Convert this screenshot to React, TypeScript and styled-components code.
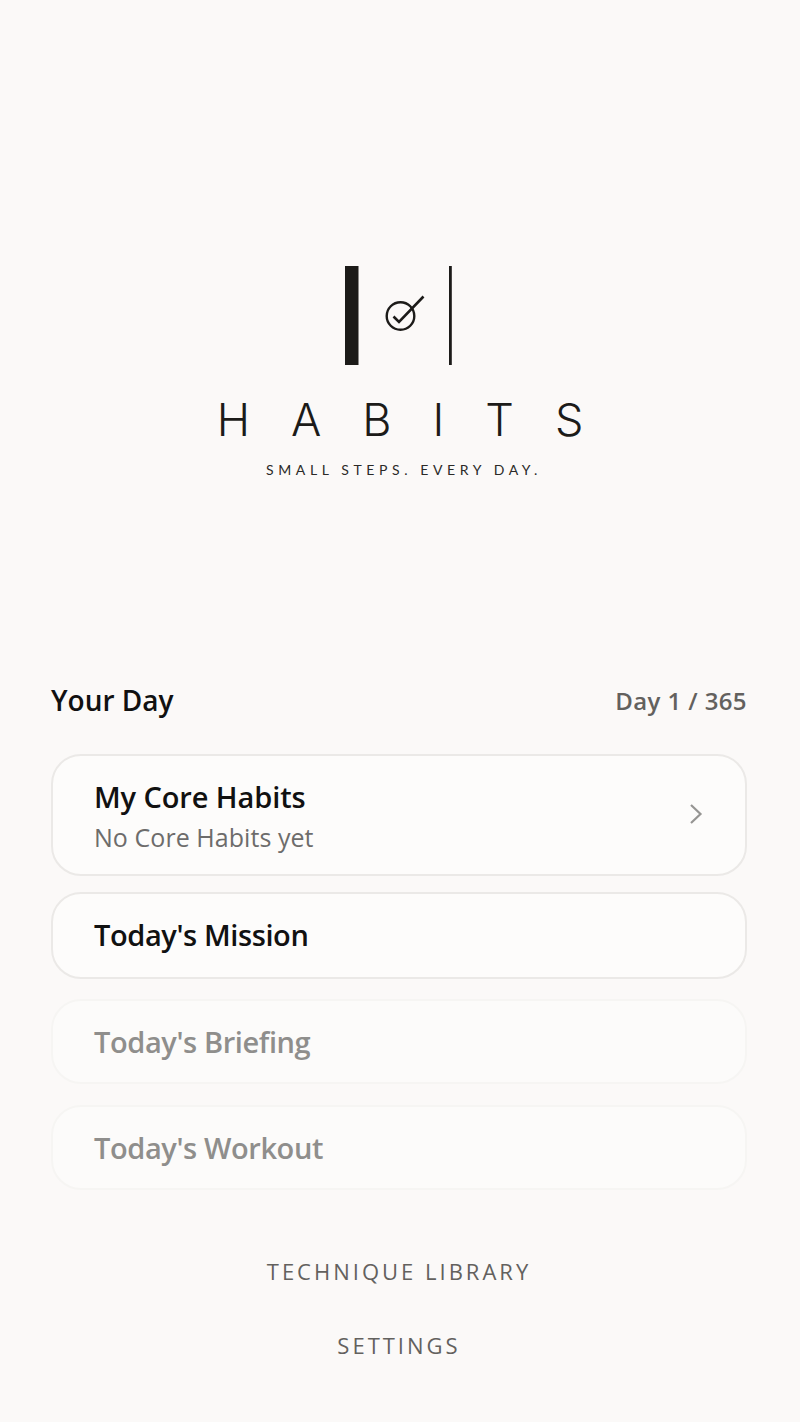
import React from "react";
import styled, { createGlobalStyle } from "styled-components";

const GlobalStyle = createGlobalStyle`
  html, body {
    margin: 0;
    padding: 0;
    background-color: #fbf9f8;
  }
`;

const LogoMark = () => (
  <svg width="110" height="100" viewBox="0 0 110 100" fill="none">
    <rect x="0" y="0" width="13.5" height="99" fill="#1c1b19" />
    <rect x="104" y="0" width="2.8" height="99" fill="#1c1b19" />
    <circle cx="55.5" cy="50" r="13.8" stroke="#1c1b19" strokeWidth="2.4" />
    <path d="M48.5 50.5 L54 56 L78.5 30.5" stroke="#1c1b19" strokeWidth="2.6" />
  </svg>
);

const Chevron = () => (
  <ChevronIcon width="14" height="22" viewBox="0 0 14 22" fill="none">
    <path d="M2 2 L11.5 11 L2 20" stroke="#969593" strokeWidth="2.2" />
  </ChevronIcon>
);

const App = () => {
  return (
    <Page>
      <GlobalStyle />
      <LogoBlock>
        <LogoMark />
        <Wordmark>HABITS</Wordmark>
        <Tagline>SMALL STEPS. EVERY DAY.</Tagline>
      </LogoBlock>

      <Header>
        <Title>Your Day</Title>
        <DayCount>Day 1 / 365</DayCount>
      </Header>

      <CoreCard>
        <div>
          <CoreTitle>My Core Habits</CoreTitle>
          <CardSub>No Core Habits yet</CardSub>
        </div>
        <Chevron />
      </CoreCard>
      <MissionCard>
        <CardTitle>Today's Mission</CardTitle>
      </MissionCard>
      <DisabledCard>
        <CardTitle $muted>Today's Briefing</CardTitle>
      </DisabledCard>
      <DisabledCard>
        <CardTitle $muted>Today's Workout</CardTitle>
      </DisabledCard>

      <FooterLinks>
        <FooterLink>TECHNIQUE LIBRARY</FooterLink>
        <FooterLink>SETTINGS</FooterLink>
      </FooterLinks>
    </Page>
  );
};

export default App;

const Page = styled.div`
  box-sizing: border-box;
  width: 800px;
  height: 1422px;
  padding: 266px 53px 0 51px;
  overflow: hidden;
  background-color: #fbf9f8;
  font-family: "Open Sans", "Noto Sans", sans-serif;
`;

const LogoBlock = styled.div`
  display: flex;
  flex-direction: column;
  align-items: center;
  height: 400px;
  padding-left: 2px;

  svg {
    display: block;
    height: 100px;
  }
`;

const Wordmark = styled.div`
  margin-top: 26px;
  font-family: Inter, Lato, sans-serif;
  font-weight: 300;
  font-size: 45px;
  line-height: 56px;
  letter-spacing: 41px;
  margin-right: -41px;
  color: #1c1b19;
`;

const Tagline = styled.div`
  margin-top: 13px;
  margin-left: 8px;
  font-family: Lato, sans-serif;
  font-weight: 400;
  font-size: 14px;
  line-height: 18px;
  letter-spacing: 4.6px;
  color: #2b2a28;
`;

const Header = styled.div`
  display: flex;
  justify-content: space-between;
  align-items: center;
  height: 40px;
  margin-top: 14px;
  margin-bottom: 34px;
`;

const Title = styled.div`
  font-size: 28px;
  font-weight: 600;
  letter-spacing: 0;
  color: #111111;
`;

const DayCount = styled.div`
  font-size: 24px;
  font-weight: 600;
  letter-spacing: 0.4px;
  color: #63615e;
`;

const Card = styled.div`
  box-sizing: border-box;
  display: flex;
  align-items: center;
  justify-content: space-between;
  padding: 0 42px 0 41px;
  border-radius: 30px;
  background-color: #fdfcfb;
`;

const CoreCard = styled(Card)`
  height: 122px;
  padding-top: 3px;
  border: 2px solid #ebe9e7;
  margin-bottom: 16px;
`;

const MissionCard = styled(Card)`
  height: 87px;
  padding-bottom: 2px;
  border: 2px solid #ebe9e7;
  margin-bottom: 20px;
`;

const DisabledCard = styled(Card)`
  height: 85px;
  border: 2px solid #f6f5f3;
  margin-bottom: 21px;
  background-color: #fcfbfa;
`;

const CardTitle = styled.div<{ $muted?: boolean }>`
  font-size: 29px;
  font-weight: 600;
  line-height: 40px;
  letter-spacing: -0.4px;
  color: ${(p) => (p.$muted ? "#8f8e8c" : "#111111")};
`;

const CoreTitle = styled(CardTitle)`
  letter-spacing: -0.1px;
`;

const CardSub = styled.div`
  margin-top: 1px;
  font-size: 25px;
  line-height: 38px;
  letter-spacing: 0.05px;
  color: #6d6c6b;
`;

const ChevronIcon = styled.svg`
  margin-bottom: 6px;
`;

const FooterLinks = styled.div`
  display: flex;
  flex-direction: column;
  align-items: center;
  gap: 42px;
  margin-top: 65px;
`;

const FooterLink = styled.div`
  font-size: 22px;
  line-height: 32px;
  letter-spacing: 3px;
  color: #63615e;
`;
